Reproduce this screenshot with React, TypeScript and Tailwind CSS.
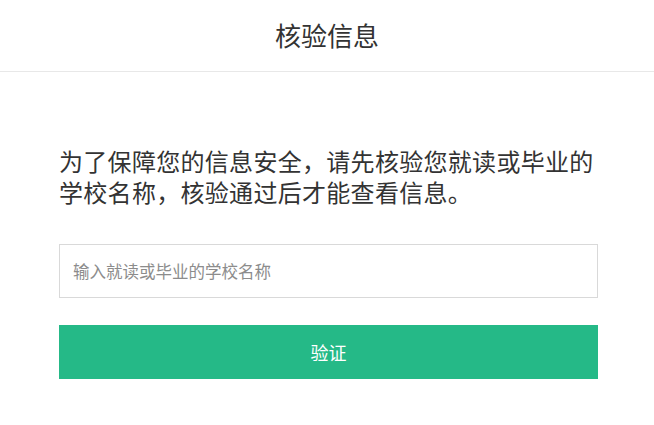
import React from "react";

export default function App() {
  return (
    <div
      className="w-[654px] h-[425px] bg-white"
      style={{ fontFamily: '"Microsoft YaHei", "Noto Sans CJK SC", "Noto Sans", sans-serif' }}
    >
      <header className="h-[72px] flex items-center justify-center border-b border-[#e8e8e8]">
        <h1 className="text-[26px] leading-none text-[#333] pb-[2px]">核验信息</h1>
      </header>
      <main className="pl-[59px] pr-[56px] pt-[73px]">
        <p className="text-[24px] leading-[31px] tracking-[0.3px] text-[#333]">
          为了保障您的信息安全，请先核验您就读或毕业的学校名称，核验通过后才能查看信息。
        </p>
        <input
          type="text"
          placeholder="输入就读或毕业的学校名称"
          className="mt-[37px] block w-full h-[54px] border border-[#d9d9d9] px-[13px] text-[16.5px] text-[#333] placeholder:text-[#8c8c8c] outline-none"
        />
        <button className="mt-[27px] block w-full h-[54px] bg-[#25b987] text-white text-[18px]">
          验证
        </button>
      </main>
    </div>
  );
}
